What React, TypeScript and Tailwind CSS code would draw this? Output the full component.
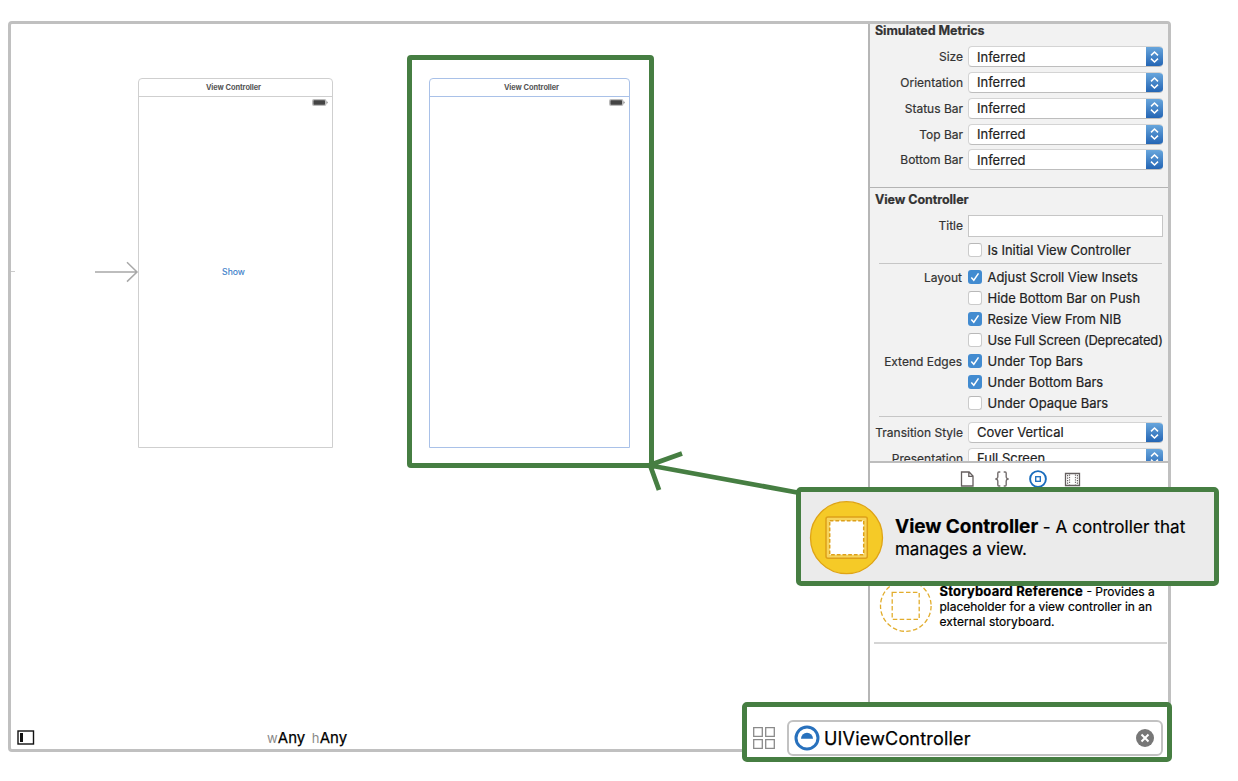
import React from "react";

function Chevrons() {
  return (
    <span className="flex h-full w-[17px] items-center justify-center bg-gradient-to-b from-[#68a6dc] to-[#2365b4]">
      <svg width="11" height="14" viewBox="0 0 11 14" fill="none" stroke="#fff" strokeWidth="1.5">
        <path d="M2 5.4 5.5 2 9 5.4M2 8.6 5.5 12 9 8.6" />
      </svg>
    </span>
  );
}

function SelectRow({ label, value }: { label: string; value: string }) {
  return (
    <div className="flex h-[25.75px] shrink-0 items-center">
      <div className="w-[93px] whitespace-nowrap pt-px text-right text-[12px] text-[#333]">{label}</div>
      <div className="ml-[5px] flex h-[21px] w-[195px] items-center justify-between overflow-hidden rounded-[4px] border border-r-0 border-[#d4d4d4] border-b-[#bdbdbd] bg-white pl-2 text-[13px] text-[#222]">
        <span className="pt-px">{value}</span>
        <Chevrons />
      </div>
    </div>
  );
}

function CheckRow({ label, text, checked }: { label?: string; text: string; checked?: boolean }) {
  return (
    <div className="flex h-[21px] shrink-0 items-center">
      <div className="w-[92px] shrink-0 whitespace-nowrap pt-px text-right text-[12px] text-[#333]">{label}</div>
      {checked ? (
        <span className="ml-[5.5px] flex h-[14px] w-[14px] shrink-0 items-center justify-center rounded-[3px] bg-[#428bd0]">
          <svg width="12" height="12" viewBox="0 0 12 12" fill="none" stroke="#fff" strokeWidth="1.5">
            <path d="M2.3 6.4 4.8 9.2 9.5 2.3" />
          </svg>
        </span>
      ) : (
        <span className="ml-[5.5px] h-[14px] w-[14px] shrink-0 rounded-[3px] border border-[#cbcbcb] border-t-[#b8b8b8] bg-white" />
      )}
      <span
        className={
          text.length > 26
            ? "ml-[6px] whitespace-nowrap text-[13px] tracking-[-0.2px] text-[#222]"
            : "ml-[6px] whitespace-nowrap text-[13px] tracking-[-0.03px] text-[#222]"
        }
      >
        {text}
      </span>
    </div>
  );
}

function Battery() {
  return (
    <svg width="16" height="7" viewBox="0 0 16 7">
      <rect x="0" y="0" width="14.5" height="7" rx="2" fill="#bbb" />
      <rect x="1.5" y="1.3" width="11.5" height="4.4" rx="0.6" fill="#444" />
      <path d="M14.6 2.2q1 .4 1 1.3t-1 1.3z" fill="#666" />
    </svg>
  );
}

function Inspector() {
  return (
    <div className="flex h-[437px] shrink-0 flex-col overflow-hidden bg-[#f2f2f2] [-webkit-text-stroke:0.2px]">
      <h2 className="ml-[5px] h-[14px] shrink-0 text-[12.5px] font-bold leading-[14px] tracking-[-0.07px] text-[#333]">Simulated Metrics</h2>
      <div className="mt-[6px] flex shrink-0 flex-col">
        <SelectRow label="Size" value="Inferred" />
        <SelectRow label="Orientation" value="Inferred" />
        <SelectRow label="Status Bar" value="Inferred" />
        <SelectRow label="Top Bar" value="Inferred" />
        <SelectRow label="Bottom Bar" value="Inferred" />
      </div>
      <div className="mt-[14px] h-px shrink-0 bg-[#b4b4b4]" />
      <h2 className="ml-[5px] mt-[6px] h-3 shrink-0 text-[12.5px] font-bold leading-3 tracking-[-0.07px] text-[#333]">View Controller</h2>
      <div className="mt-[9px] flex h-[22px] shrink-0 items-center">
        <div className="w-[93px] pt-px text-right text-[12px] text-[#333]">Title</div>
        <div className="ml-[5px] h-[22px] w-[195px] border border-[#c6c6c6] bg-white" />
      </div>
      <div className="mt-[3px] flex shrink-0 flex-col">
        <CheckRow text="Is Initial View Controller" />
      </div>
      <div className="ml-[9px] mr-[6px] mt-[2px] h-px shrink-0 bg-[#c6c6c6]" />
      <div className="mt-[3px] flex shrink-0 flex-col">
        <CheckRow label="Layout" text="Adjust Scroll View Insets" checked />
        <CheckRow text="Hide Bottom Bar on Push" />
        <CheckRow text="Resize View From NIB" checked />
        <CheckRow text="Use Full Screen (Deprecated)" />
        <CheckRow label="Extend Edges" text="Under Top Bars" checked />
        <CheckRow text="Under Bottom Bars" checked />
        <CheckRow text="Under Opaque Bars" />
      </div>
      <div className="ml-[9px] mr-[6px] mt-[2px] h-px shrink-0 bg-[#c6c6c6]" />
      <div className="mt-[3px] flex shrink-0 flex-col">
        <SelectRow label="Transition Style" value="Cover Vertical" />
        <SelectRow label="Presentation" value="Full Screen" />
      </div>
    </div>
  );
}

function LibraryTabs() {
  return (
    <div className="flex h-8 shrink-0 items-center pl-[90px]">
      <svg width="14" height="16" viewBox="0 0 14 16" fill="none" stroke="#655f5f" strokeWidth="1.3">
        <path d="M1.5 1h7.6l3.9 4v10H1.5zM8.8 1v4.3H13" />
      </svg>
      <svg className="ml-[21px]" width="14" height="16" viewBox="0 0 14 16" fill="none" stroke="#746e6e" strokeWidth="1.4">
        <path d="M5.3 1H3.8Q2.8 1 2.8 2.2v3.9Q2.8 7.3 1 8q1.8.7 1.8 1.9v3.9q0 1.2 1 1.2h1.5M8.7 1h1.5q1 0 1 1.2v3.9q0 1.2 1.8 1.9-1.8.7-1.8 1.9v3.9q0 1.2-1 1.2H8.7" />
      </svg>
      <svg className="ml-[19.5px]" width="18" height="18" viewBox="0 0 18 18" fill="none" stroke="#196cbd">
        <circle cx="9" cy="9" r="7.9" strokeWidth="1.9" />
        <rect x="6.7" y="6.7" width="4.6" height="4.6" strokeWidth="1.3" />
      </svg>
      <svg className="ml-[17.5px]" width="17" height="15" viewBox="0 0 17 15" fill="none" stroke="#655f5f">
        <path d="M1.5 1.5h14v12h-14z" strokeWidth="1.3" />
        <path d="M5.6 2.5v10M11.4 2.5v10" strokeWidth="1" strokeDasharray="1.3 1.1" />
        <path d="M3.6 3v10M13.4 3v10" strokeWidth="1.2" strokeDasharray="1.3 1.2" />
      </svg>
    </div>
  );
}

function Library() {
  return (
    <div className="flex grow flex-col border-t-2 border-[#bdbdbd] bg-white">
      <LibraryTabs />
      <div className="ml-1 mr-px mt-[84px] flex h-[65px] shrink-0 border-b-2 border-[#d5d5d5] pl-[5px]">
        <svg width="54" height="54" viewBox="0 0 54 54" fill="none" stroke="#e2ad2d" strokeWidth="1.3" strokeDasharray="4.5 2.4">
          <circle cx="26.8" cy="27" r="25.3" />
          <rect x="13.2" y="13.3" width="27" height="27" />
        </svg>
        <p className="ml-[6.5px] mt-[4.5px] whitespace-nowrap text-[12px] leading-[15.3px] text-black [-webkit-text-stroke:0.2px]">
          <b className="text-[13px] tracking-[0.2px]">Storyboard Reference</b> - Provides a<br />
          <span className="tracking-[-0.03px]">placeholder for a view controller in an</span><br />
          <span className="tracking-[0.03px]">external storyboard.</span>
        </p>
      </div>
    </div>
  );
}

function Scene({ className, titleClass, children }: { className: string; titleClass: string; children?: React.ReactNode }) {
  return (
    <div className={"absolute flex h-[370px] flex-col rounded-t-[4px] border " + className}>
      <div className="flex h-[18px] shrink-0 items-center justify-center border-b border-inherit text-[7.4px] font-bold tracking-[-0.05px] text-[#555]">
        <span className={titleClass}>View Controller</span>
      </div>
      <div className="flex h-[11px] shrink-0 items-center justify-end pr-[4.5px]">
        <Battery />
      </div>
      {children}
    </div>
  );
}

function Canvas() {
  return (
    <div className="relative grow">
      <div className="absolute left-0 top-[247px] h-px w-[4px] bg-[#ccc]" />
      <Scene className="left-[127px] top-[54px] w-[195px] border-[#cfcfcf]" titleClass="mr-[4px]">
        <div className="mr-[4px] mt-[157px] text-center text-[8.7px] leading-[14px] text-[#3d7fcb] [-webkit-text-stroke:0.15px]">Show</div>
      </Scene>
      <Scene className="left-[418px] top-[54px] w-[201px] border-[#a9c1e8]" titleClass="ml-[4px]" />
      <svg className="absolute left-[84px] top-[237px]" width="44" height="22" viewBox="0 0 44 22" fill="none" stroke="#a8a8a8" strokeWidth="1.5">
        <path d="M0 11h42M32 1.3 42 11 32 20.6" />
      </svg>
    </div>
  );
}

function CanvasBar() {
  return (
    <div className="flex h-[24px] shrink-0 items-center">
      <svg className="ml-[6px]" width="18" height="15" viewBox="0 0 18 15">
        <rect x="1" y="1" width="15.5" height="13" fill="none" stroke="#111" strokeWidth="1.4" />
        <rect x="3" y="3" width="3" height="9" fill="#111" />
      </svg>
      <div className="ml-[232px] whitespace-nowrap pt-[2px] text-[15px] leading-6 text-black">
        <span className="text-[13px] text-[#8a8a8a]">w</span> <span className="-ml-[4px] [-webkit-text-stroke:0.25px]">Any</span>
        <span className="ml-[6.5px] text-[13px] text-[#8a8a8a]">h</span> <span className="-ml-[4px] [-webkit-text-stroke:0.25px]">Any</span>
      </div>
    </div>
  );
}

function Callout() {
  return (
    <div className="absolute left-[796px] top-[487px] flex h-[99px] w-[423px] rounded-[5px] border-[5px] border-[#467e42] bg-[#ebebeb]">
      <svg className="ml-[8px] mt-[8px] shrink-0" width="75" height="75" viewBox="0 0 75 75" fill="none">
        <circle cx="37.5" cy="37.7" r="36" fill="#f5ca27" stroke="#dfa415" strokeWidth="1.3" />
        <rect x="17" y="17" width="41.3" height="41.3" rx="2" fill="#f7d45c" stroke="#dda019" strokeWidth="1.5" />
        <rect x="20.7" y="20.7" width="34" height="34" fill="#fff" stroke="#dda019" strokeWidth="1.5" strokeDasharray="3.7 2" />
      </svg>
      <p className="ml-[11px] mt-[24px] whitespace-nowrap text-[17px] leading-[22px] text-black [-webkit-text-stroke:0.2px]">
        <b className="text-[19px] tracking-[-0.05px]">View Controller</b> <span className="tracking-[0.08px]">- A controller that</span><br />
        <span className="tracking-[-0.1px]">manages a view.</span>
      </p>
    </div>
  );
}

function SearchBar() {
  return (
    <div className="absolute left-[742px] top-[702px] flex h-[60px] w-[430px] items-start rounded-[5px] border-[5px] border-[#467e42] bg-white">
      <svg className="ml-[6px] mt-[20px]" width="22" height="22" viewBox="0 0 22 22" fill="none" stroke="#8a8a8a" strokeWidth="1.3">
        <path d="M.7.7h8.6v8.6H.7zM12.7.7h8.6v8.6h-8.6zM.7 12.7h8.6v8.6H.7zM12.7 12.7h8.6v8.6h-8.6z" />
      </svg>
      <div className="ml-[12px] mt-[13px] flex h-[36px] w-[376px] items-center rounded-[6px] border-2 border-[#c2c2c2]">
        <svg className="ml-[5px]" width="26" height="26" viewBox="0 0 26 26">
          <circle cx="13" cy="13" r="11" fill="none" stroke="#2871bd" strokeWidth="3" />
          <path d="M7 13.8a6 6 0 0 1 12 0z" fill="#2871bd" />
        </svg>
        <span className="ml-[4px] grow text-[18px] tracking-[0.19px] text-black [-webkit-text-stroke:0.25px]">UIViewController</span>
        <svg className="mr-[7px]" width="18" height="18" viewBox="0 0 18 18">
          <circle cx="9" cy="9" r="9" fill="#777" />
          <path d="m5.5 5.5 7 7m0-7-7 7" stroke="#fff" strokeWidth="2" />
        </svg>
      </div>
    </div>
  );
}

export default function App() {
  return (
    <div className="relative h-[781px] w-[1238px] overflow-hidden bg-white pl-[8px] pt-[21px] font-['Inter',sans-serif]">
      <div className="flex h-[731px] w-[1163px] overflow-hidden rounded-[4px] border-[3px] border-[#c0c0c0]">
        <main className="flex w-[857px] shrink-0 flex-col">
          <Canvas />
          <CanvasBar />
        </main>
        <aside className="flex w-[300px] shrink-0 flex-col border-l-2 border-[#b6b6b6]">
          <Inspector />
          <Library />
        </aside>
      </div>
      <div className="absolute left-[407px] top-[55px] h-[413px] w-[247px] rounded-[4px] border-[5px] border-[#467e42]" />
      <svg className="absolute left-[640px] top-[445px]" width="170" height="55" viewBox="0 0 170 55" fill="none" stroke="#467e42" strokeWidth="4.8">
        <path d="M10 20.5 160 48M42 8.5 10 20 19 45" />
      </svg>
      <Callout />
      <SearchBar />
    </div>
  );
}
